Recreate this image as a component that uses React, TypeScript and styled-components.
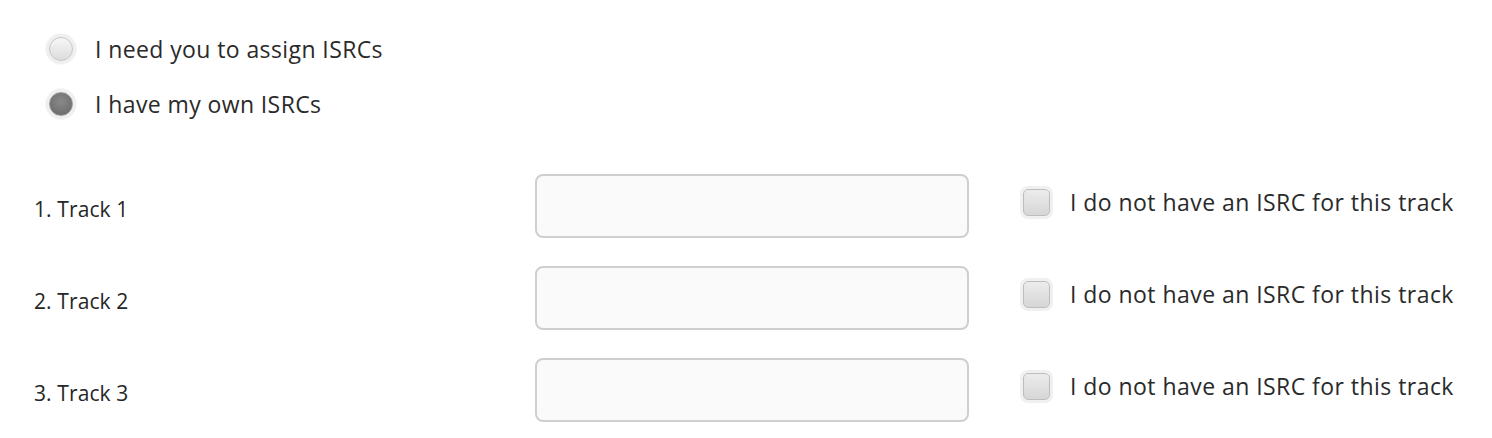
import React from 'react';
import styled, { createGlobalStyle } from 'styled-components';

const GlobalStyle = createGlobalStyle`
  html, body {
    margin: 0;
    padding: 0;
    background: #fff;
  }
  body {
    font-family: 'Open Sans', 'Liberation Sans', sans-serif;
    color: #2b2b2b;
  }
`;

const Page = styled.div`
  width: 1492px;
  height: 438px;
  box-sizing: border-box;
  padding: 35px 0 0 34px;
`;

const RadioGroup = styled.div`
  display: flex;
  flex-direction: column;
  gap: 27px;
  padding-left: 15px;
  margin-bottom: 56px;
`;

const Choice = styled.label`
  display: flex;
  align-items: center;
  gap: 22px;
  height: 28px;
  font-size: 23px;
  letter-spacing: 0.4px;
  color: #2a2a2a;
`;

const RadioDot = styled.span<{ $checked?: boolean }>`
  width: 24px;
  height: 24px;
  border-radius: 50%;
  box-sizing: border-box;
  border: 1.5px solid ${(p) => (p.$checked ? '#9a9a9a' : '#c4c4c4')};
  background: ${(p) =>
    p.$checked
      ? 'radial-gradient(circle at 50% 40%, #8a8a8a 0%, #707070 70%, #666 100%)'
      : 'linear-gradient(#f7f7f7, #dcdcdc)'};
  box-shadow: 0 0 0 3px #efefef, 0 0 0 4px #f7f7f7;
  flex: none;
`;

const Tracks = styled.div`
  display: flex;
  flex-direction: column;
  gap: 28px;
`;

const TrackRow = styled.div`
  display: flex;
  align-items: center;
  height: 64px;
`;

const TrackLabel = styled.div`
  width: 501px;
  flex: none;
  font-size: 21px;
  letter-spacing: 0.1px;
  color: #262626;
  padding-top: 6px;
`;

const IsrcInput = styled.input`
  width: 434px;
  height: 64px;
  box-sizing: border-box;
  flex: none;
  border: 2px solid #cfcfcf;
  border-radius: 8px;
  background: #fafafa;
  outline: none;
  font: inherit;
  font-size: 20px;
  padding: 0 14px;
`;

const NoIsrc = styled.label`
  display: flex;
  align-items: center;
  gap: 20px;
  margin-left: 54px;
  margin-top: -8px;
  font-size: 23px;
  letter-spacing: 0.45px;
  color: #2a2a2a;
`;

const CheckBox = styled.span`
  width: 27px;
  height: 27px;
  box-sizing: border-box;
  border-radius: 5px;
  border: 1.5px solid #bdbdbd;
  background: linear-gradient(#ececec, #d6d6d6);
  box-shadow: 0 0 0 3px #f0f0f0;
  flex: none;
`;

const tracks = ['Track 1', 'Track 2', 'Track 3'];

export default function App() {
  return (
    <>
      <GlobalStyle />
      <Page>
        <RadioGroup>
          <Choice>
            <RadioDot />
            I need you to assign ISRCs
          </Choice>
          <Choice>
            <RadioDot $checked />
            I have my own ISRCs
          </Choice>
        </RadioGroup>

        <Tracks>
          {tracks.map((name, i) => (
            <TrackRow key={name}>
              <TrackLabel>
                {i + 1}. {name}
              </TrackLabel>
              <IsrcInput type="text" />
              <NoIsrc>
                <CheckBox />
                I do not have an ISRC for this track
              </NoIsrc>
            </TrackRow>
          ))}
        </Tracks>
      </Page>
    </>
  );
}
